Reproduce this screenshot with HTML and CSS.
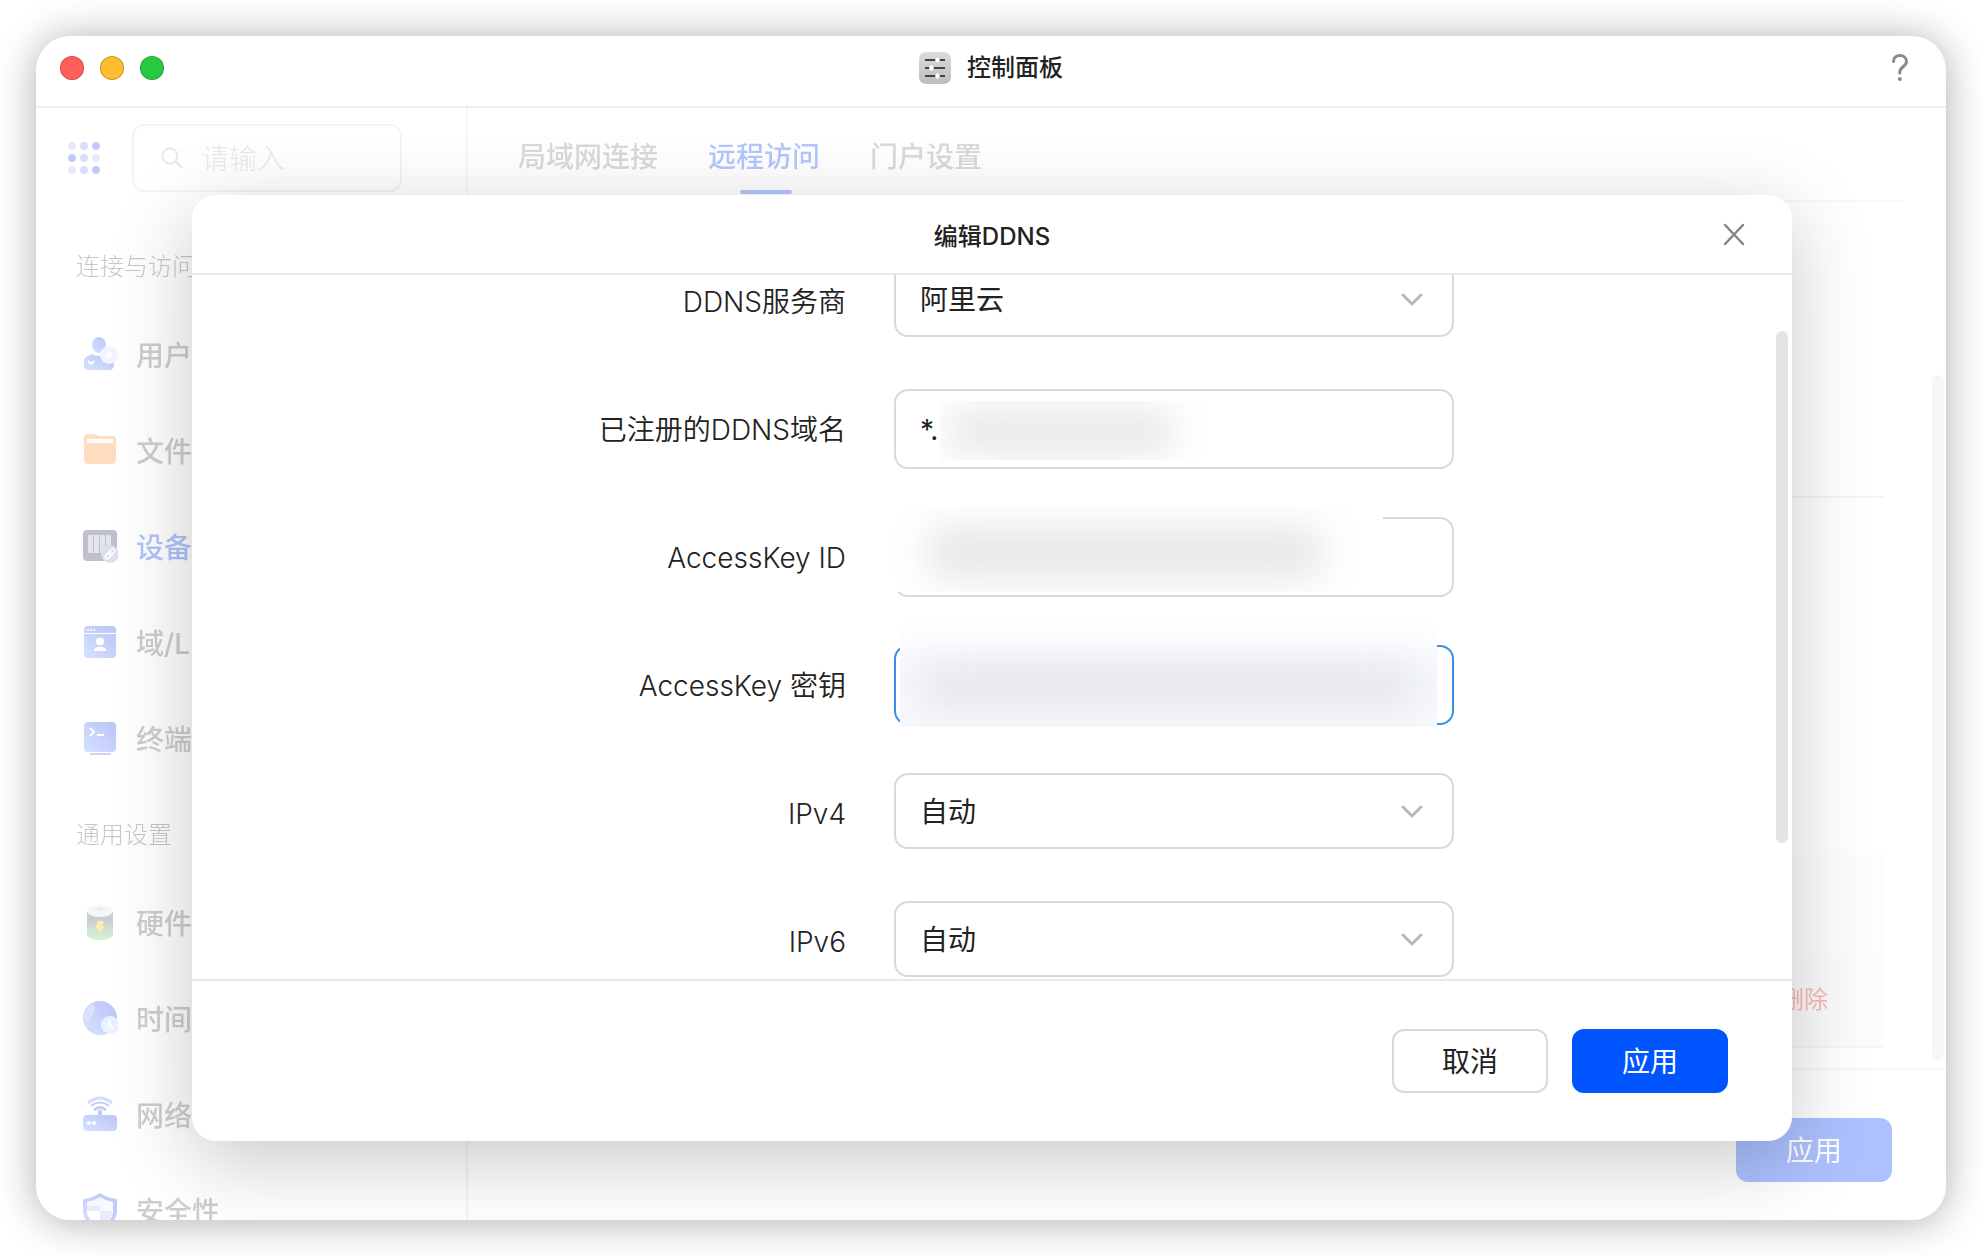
FILE: index.html
```html
<!DOCTYPE html>
<html lang="zh-CN">

<head>
    <meta charset="UTF-8">
    <meta name="viewport" content="width=device-width, initial-scale=1.0">
    <title>控制面板</title>
    <link rel="stylesheet" href="styles.css">
</head>

<body>
    <div class="window">
        <header class="titlebar">
            <div class="lights">
                <span class="light red"></span>
                <span class="light yellow"></span>
                <span class="light green"></span>
            </div>
            <div class="window-title">
                <svg width="32" height="32" viewBox="0 0 32 32">
                    <defs>
                        <linearGradient id="gray" x1="0" y1="0" x2="0" y2="1">
                            <stop offset="0" stop-color="#dcdcdc" />
                            <stop offset="1" stop-color="#bdbdbd" />
                        </linearGradient>
                    </defs>
                    <rect width="32" height="32" rx="7" fill="url(#gray)" />
                    <path d="M6 8h20M6 16h20M6 24h20" stroke="#444" stroke-width="2" />
                    <g fill="#fff" stroke="#ccc" stroke-width="1">
                        <rect x="16.500" y="5" width="4" height="6" rx="1.500" />
                        <rect x="10.500" y="13" width="4" height="6" rx="1.500" />
                        <rect x="16.500" y="21" width="4" height="6" rx="1.500" />
                    </g>
                </svg>
                <h1>控制面板</h1>
            </div>
            <button class="icon-button help" type="button" aria-label="帮助">
                <svg width="20" height="30" viewBox="0 0 20 30" fill="none" stroke="#8a8a8a" stroke-width="3" stroke-linecap="round">
                    <path d="M3.500 8.500C3.500 4.500 6.500 2.500 10 2.500s6.500 2.200 6.500 6c0 5-6.700 5.500-6.700 10.500v1" />
                    <circle cx="9.800" cy="26" r="2" fill="#8a8a8a" stroke="none" />
                </svg>
            </button>
        </header>

        <div class="content">
            <div class="backdrop">
                <aside class="sidebar">
                    <div class="search-row">
                        <svg width="32" height="32" viewBox="0 0 32 32">
                            <g fill="#b9b0f2">
                                <circle cx="4" cy="4" r="4" />
                                <circle cx="28" cy="16" r="4" />
                                <circle cx="4" cy="28" r="4" />
                            </g>
                            <g fill="#84a2fa">
                                <circle cx="16" cy="4" r="4" />
                                <circle cx="16" cy="16" r="4" />
                                <circle cx="16" cy="28" r="4" />
                            </g>
                            <g fill="#3a62ee">
                                <circle cx="28" cy="4" r="4" />
                                <circle cx="4" cy="16" r="4" />
                                <circle cx="28" cy="28" r="4" />
                            </g>
                        </svg>
                        <label class="search">
                            <svg width="22" height="22" viewBox="0 0 22 22" fill="none" stroke="#bbb" stroke-width="2" stroke-linecap="round">
                                <circle cx="9" cy="9" r="7.500" />
                                <path d="M14.500 14.500L20.500 20.500" />
                            </svg>
                            <input type="text" placeholder="请输入" aria-label="搜索">
                        </label>
                    </div>
                    <nav>
                        <h2 class="group">连接与访问</h2>
                        <a class="item" href="#">
                            <svg width="36" height="36" viewBox="0 0 36 36">
                                <defs>
                                    <linearGradient id="blue" x1="0" y1="1" x2="1" y2="0">
                                        <stop offset="0" stop-color="#7ea4ff" />
                                        <stop offset="1" stop-color="#3049e8" />
                                    </linearGradient>
                                </defs>
                                <ellipse cx="17" cy="9" rx="7" ry="8" fill="url(#blue)" />
                                <path d="M2 24q0-2 2-3l6-3q6 4 13 0l7 3q2 1 2 4v5q-1 4-5 4H8q-6 0-6-4z" fill="url(#blue)" />
                                <path d="M6 25l3 3 3-3" fill="none" stroke="#fff" stroke-width="2" />
                                <circle cx="27" cy="19" r="9" fill="#d5dcfd" />
                                <circle cx="27" cy="19" r="3" fill="#fff" />
                            </svg>
                            用户
                        </a>
                        <a class="item" href="#">
                            <svg width="36" height="36" viewBox="0 0 36 36">
                                <path d="M2 6q0-4 4-4h7l4 2h13q4 0 4 4v20H2z" fill="#fb9a48" />
                                <rect x="5" y="7" width="26" height="4" fill="#fff" />
                                <path d="M2 11h32v17q0 4-4 4H6q-4 0-4-4z" fill="#ff9b3c" />
                            </svg>
                            文件
                        </a>
                        <a class="item active" href="#">
                            <svg width="36" height="36" viewBox="0 0 36 36">
                                <rect x="1" y="2" width="34" height="31" rx="4" fill="#3b3f60" />
                                <g fill="#a6accb">
                                    <rect x="6" y="7" width="5" height="18" />
                                    <rect x="12" y="7" width="5" height="18" />
                                    <rect x="18" y="7" width="5" height="18" />
                                    <rect x="24" y="7" width="5" height="18" />
                                </g>
                                <circle cx="28" cy="26" r="9" fill="#9ca0ba" />
                                <g fill="none" stroke="#fff" stroke-width="1.500" transform="rotate(-45 28 26)">
                                    <rect x="22" y="24" width="7" height="4" rx="2" />
                                    <rect x="27" y="24" width="7" height="4" rx="2" />
                                </g>
                            </svg>
                            设备
                        </a>
                        <a class="item" href="#">
                            <svg width="36" height="36" viewBox="0 0 36 36">
                                <rect x="2" y="2" width="32" height="32" rx="4" fill="url(#blue)" />
                                <path d="M2 9.500h32" stroke="#fff" />
                                <path d="M5 6h9" stroke="#c4d0ff" stroke-width="2" stroke-dasharray="2 1" />
                                <circle cx="18" cy="17.500" r="4" fill="#fff" />
                                <path d="M12 27q0-4 4-4h4q4 0 4 4z" fill="#fff" />
                            </svg>
                            域/LDAP
                        </a>
                        <a class="item" href="#">
                            <svg width="36" height="36" viewBox="0 0 36 36">
                                <rect x="2" y="2" width="32" height="30" rx="4" fill="url(#blue)" />
                                <path d="M8 34h21" stroke="#5c7af2" stroke-width="2" />
                                <path d="M8 8l4 4-4 4M15 15h7" fill="none" stroke="#fff" stroke-width="2" />
                            </svg>
                            终端
                        </a>
                        <h2 class="group">通用设置</h2>
                        <a class="item" href="#">
                            <svg width="36" height="36" viewBox="0 0 36 36">
                                <defs>
                                    <linearGradient id="battery" x1="0" y1="0" x2="0" y2="1">
                                        <stop offset="0.300" stop-color="#5a6270" />
                                        <stop offset="0.600" stop-color="#6f9d80" />
                                        <stop offset="0.900" stop-color="#6fd078" />
                                    </linearGradient>
                                </defs>
                                <path d="M5 6h26v25q-2 5-13 5T5 31z" fill="url(#battery)" />
                                <ellipse cx="18" cy="7" rx="13" ry="6" fill="#e1e4e6" />
                                <ellipse cx="18" cy="5" rx="4" ry="1.500" fill="#b5babd" />
                                <path d="M16 17h6l-2 5h3l-7 9 1-6h-4z" fill="#ffc400" />
                            </svg>
                            硬件
                        </a>
                        <a class="item" href="#">
                            <svg width="36" height="36" viewBox="0 0 36 36">
                                <circle cx="18" cy="18" r="17" fill="url(#blue)" />
                                <path d="M1 18q3-10 10-15l2 8-8 12z" fill="#8ba6fa" />
                                <circle cx="28" cy="25" r="9" fill="#c2d5ff" />
                                <path d="M27.500 20v6l4 2" fill="none" stroke="#fff" stroke-width="2" />
                            </svg>
                            时间
                        </a>
                        <a class="item" href="#">
                            <svg width="36" height="36" viewBox="0 0 36 36">
                                <rect x="1" y="19" width="34" height="16" rx="4" fill="url(#blue)" />
                                <path d="M18 14v6" stroke="#4463ef" stroke-width="4" />
                                <g fill="none" stroke="#4463ef" stroke-width="2">
                                    <path d="M6 7q12-10 24 0" stroke-width="3" opacity=".7" />
                                    <path d="M9 10q9-7 18 0" />
                                    <path d="M12 14q6-5 12 0" stroke-width="3" />
                                </g>
                                <circle cx="7" cy="27" r="2" fill="#fff" />
                                <circle cx="12" cy="27" r="2" fill="#fff" />
                            </svg>
                            网络
                        </a>
                        <a class="item" href="#">
                            <svg width="36" height="36" viewBox="0 0 36 36">
                                <path d="M18 1q7 5 17 6v13q0 11-17 16Q1 31 1 20V7q10-1 17-6z" fill="url(#blue)" />
                                <path d="M18 5q6 4 13 5v10q0 8-13 13Q5 28 5 20V10q7-1 13-5z" fill="#e8ecff" />
                                <path d="M5 19h13v14Q6 28 5 19z" fill="#fff" />
                                <path d="M9 14h9v5H5v-4zM18 19h12q0 8-12 14z" fill="#b8bff8" />
                            </svg>
                            安全性
                        </a>
                    </nav>
                </aside>

                <main class="main">
                    <nav class="tabs">
                        <a href="#">局域网连接</a>
                        <a href="#" class="current">远程访问</a>
                        <a href="#">门户设置</a>
                    </nav>
                    <div class="scroll">
                        <section class="section"></section>
                        <section class="records">
                            <div class="records-head"></div>
                            <div class="records-row"><button class="delete" type="button">删除</button></div>
                        </section>
                        <div class="scrollbar main-bar"></div>
                    </div>
                    <footer class="main-footer">
                        <button class="button primary" type="button">应用</button>
                    </footer>
                </main>
            </div>

            <div class="modal" role="dialog" aria-labelledby="dialogTitle">
                <header class="modal-header">
                    <h2 id="dialogTitle">编辑DDNS</h2>
                    <button class="icon-button" type="button" aria-label="关闭">
                        <svg width="24" height="24" viewBox="0 0 24 24" stroke="#858585" stroke-width="2.500" stroke-linecap="round">
                            <path d="M3 3l18 19M21 3L3 22" />
                        </svg>
                    </button>
                </header>
                <div class="modal-body">
                    <form class="form">
                        <div class="row">
                            <label for="provider">DDNS服务商</label>
                            <div class="field">
                                <select id="provider">
                                    <option>阿里云</option>
                                </select>
                                <svg class="chevron" width="24" height="14" viewBox="0 0 24 14">
                                    <path d="M3 2l9 9 9-9" />
                                </svg>
                            </div>
                        </div>
                        <div class="row">
                            <label for="domain">已注册的DDNS域名</label>
                            <div class="field">
                                <input type="text" id="domain" value="*.">
                                <span class="mask mask-domain"></span>
                            </div>
                        </div>
                        <div class="row">
                            <label for="keyId">AccessKey ID</label>
                            <div class="field">
                                <input type="text" id="keyId">
                                <span class="mask mask-id"></span>
                            </div>
                        </div>
                        <div class="row">
                            <label for="keySecret">AccessKey 密钥</label>
                            <div class="field">
                                <input class="focused" type="text" id="keySecret">
                                <span class="mask mask-secret"></span>
                            </div>
                        </div>
                        <div class="row">
                            <label for="ipv4">IPv4</label>
                            <div class="field">
                                <select id="ipv4">
                                    <option>自动</option>
                                </select>
                                <svg class="chevron" width="24" height="14" viewBox="0 0 24 14">
                                    <path d="M3 2l9 9 9-9" />
                                </svg>
                            </div>
                        </div>
                        <div class="row">
                            <label for="ipv6">IPv6</label>
                            <div class="field">
                                <select id="ipv6">
                                    <option>自动</option>
                                </select>
                                <svg class="chevron" width="24" height="14" viewBox="0 0 24 14">
                                    <path d="M3 2l9 9 9-9" />
                                </svg>
                            </div>
                        </div>
                    </form>
                    <div class="scrollbar modal-bar"></div>
                </div>
                <footer class="modal-footer">
                    <button class="button" type="button">取消</button>
                    <button class="button primary" type="button">应用</button>
                </footer>
            </div>
        </div>
    </div>
</body>

</html>
```

FILE: styles.css
```css
* {
    box-sizing: border-box;
}

body {
    margin: 0;
    padding: 36px;
    height: 100vh;
    background-color: #fff;
    font-family: Inter, "Noto Sans CJK SC", sans-serif;
    font-size: 28px;
    color: #222;
}

h1,
h2 {
    margin: 0;
    font-size: 24px;
    font-weight: 500;
}

a {
    color: inherit;
    text-decoration: none;
}

svg {
    display: block;
    flex: none;
}

input,
select,
button {
    font: inherit;
    color: inherit;
}

/* 窗口 */
.window {
    display: flex;
    flex-direction: column;
    height: 100%;
    border-radius: 34px;
    background-color: #fff;
    box-shadow: 0 2px 40px rgba(0, 0, 0, 0.32);
    overflow: hidden;
}

.titlebar {
    display: grid;
    grid-template-columns: 1fr auto 1fr;
    align-items: center;
    height: 72px;
    padding: 0 24px 6px;
    border-bottom: 2px solid #eee;
}

.lights {
    display: flex;
    gap: 16px;
}

.light {
    width: 24px;
    height: 24px;
    border-radius: 50%;
    border: 1px solid rgba(0, 0, 0, 0.2);
}

.red {
    background-color: #ff5f57;
}

.yellow {
    background-color: #febc2e;
}

.green {
    background-color: #28c840;
}

.window-title {
    display: flex;
    align-items: center;
    gap: 16px;
}

.window-title h1 {
    line-height: 32px;
}

.icon-button {
    justify-self: end;
    padding: 0;
    border: none;
    background: none;
    cursor: pointer;
}

.help {
    margin-right: 12px;
}

.content {
    position: relative;
    flex: 1;
    min-height: 0;
}

/* 弹窗打开时的背景页 */
.backdrop {
    display: flex;
    height: 100%;
    opacity: 0.32;
}

.sidebar {
    width: 432px;
    border-right: 2px solid #e2e2e2;
    overflow: hidden;
}

.search-row {
    display: flex;
    align-items: center;
    gap: 32px;
    height: 112px;
    padding: 0 64px 12px 32px;
}

.search {
    display: flex;
    flex: 1;
    align-items: center;
    gap: 18px;
    height: 68px;
    padding: 0 27px;
    border: 2px solid #ddd;
    border-radius: 12px;
}

.search input {
    width: 100%;
    padding: 2px 0 0;
    border: none;
    outline: none;
    background: none;
}

.search input::placeholder {
    color: #bbb;
    font-weight: 300;
}

.group {
    padding: 6px 0 0 40px;
    font-weight: 300;
    line-height: 82px;
    color: #555;
}

.item {
    display: flex;
    align-items: center;
    gap: 18px;
    height: 96px;
    padding: 0 0 4px 46px;
    font-weight: 500;
    color: #666;
}

.item.active {
    color: #0a4bf5;
}

.main {
    display: flex;
    flex: 1;
    flex-direction: column;
}

.tabs {
    display: flex;
    gap: 50px;
    height: 94px;
    margin: 0 42px 0 50px;
    border-bottom: 2px solid #e6e6e6;
    color: #888;
    font-weight: 500;
    line-height: 98px;
}

.current {
    position: relative;
    color: #1650ff;
}

.current::after {
    content: "";
    position: absolute;
    left: 50%;
    top: 82px;
    width: 52px;
    height: 4px;
    margin-left: -24px;
    border-radius: 2px;
    background-color: #1650ff;
}

.scroll {
    position: relative;
    display: flex;
    flex: 1;
    flex-direction: column;
    justify-content: space-between;
    padding: 0 62px 20px 50px;
}

.section {
    height: 296px;
    border-bottom: 2px solid #e2e2e2;
}

.records {
    border-bottom: 2px solid #ddd;
}

.records-head {
    height: 100px;
    background-color: #fbfbfb;
}

.records-row {
    display: flex;
    align-items: center;
    justify-content: flex-end;
    height: 92px;
    padding: 0 56px 6px 0;
    background-color: #f6f6f6;
}

.delete {
    padding: 0;
    border: none;
    background: none;
    font-size: 24px;
    color: #f0281e;
}

.main-footer {
    display: flex;
    justify-content: flex-end;
    padding: 48px 54px 38px;
    border-top: 2px solid #e2e2e2;
}

.scrollbar {
    position: absolute;
    width: 12px;
    border-radius: 6px;
    background-color: #e4e4e4;
}

.main-bar {
    top: 20%;
    right: 2px;
    bottom: 8px;
}

/* 编辑弹窗 */
.modal {
    position: absolute;
    top: 87px;
    right: 154px;
    bottom: 79px;
    left: 156px;
    display: flex;
    flex-direction: column;
    border-radius: 24px;
    background-color: #fff;
    box-shadow: 0 20px 80px rgba(0, 0, 0, 0.22);
}

.modal-header {
    display: grid;
    grid-template-columns: 1fr auto 1fr;
    align-items: center;
    height: 80px;
    padding: 0 46px;
    border-bottom: 2px solid #e6e8ea;
}

.modal-header h2 {
    grid-column: 2;
}

.modal-body {
    position: relative;
    flex: 1;
    min-height: 0;
    overflow: hidden;
}

/* 表单已向下滚动 */
.form {
    display: flex;
    flex-direction: column;
    gap: 48px;
    margin-top: -14px;
}

.row {
    display: flex;
    gap: 48px;
    height: 80px;
}

.row label {
    width: 654px;
    line-height: 82px;
    text-align: right;
    font-weight: 350;
}

.field {
    position: relative;
    width: 560px;
}

.field input,
.field select {
    display: block;
    width: 100%;
    height: 80px;
    padding: 2px 24px 0;
    border: 2px solid #d9d9d9;
    border-radius: 14px;
    outline: none;
    background-color: #fff;
    appearance: none;
}

.field select {
    height: 76px;
}

.field .focused {
    border-color: #3b8fe8;
}

.chevron {
    position: absolute;
    top: 32px;
    right: 30px;
    fill: none;
    stroke: #b8b8b8;
    stroke-width: 3;
    stroke-linecap: round;
    pointer-events: none;
}

/* 敏感内容遮罩 */
.mask {
    position: absolute;
    overflow: hidden;
    background-color: #fff;
    pointer-events: none;
}

.mask::before {
    content: "";
    position: absolute;
    border-radius: 20px;
    background-color: #e8e8e8;
    filter: blur(18px);
}

.mask-domain {
    top: 12px;
    left: 46px;
    width: 270px;
    height: 59px;
}

.mask-domain::before {
    inset: 8px 34px 6px 6px;
}

.mask-id {
    top: -10px;
    left: -14px;
    width: 503px;
    height: 85px;
}

.mask-id::before {
    inset: 18px 58px 12px 46px;
}

.mask-secret {
    top: -26px;
    right: 17px;
    left: 6px;
    height: 108px;
    background: linear-gradient(#fff, #f5f8fc 50%, #f6f8fc);
}

.mask-secret::before {
    inset: 44px 20px 20px;
    background-color: #e6e7ea;
}

.modal-bar {
    top: 56px;
    right: 4px;
    height: 512px;
}

.modal-footer {
    display: flex;
    justify-content: flex-end;
    gap: 24px;
    padding: 48px 64px;
    border-top: 2px solid #e8eaea;
}

.button {
    width: 156px;
    height: 64px;
    padding: 0 0 2px;
    border: 2px solid #d9d9d9;
    border-radius: 12px;
    background-color: #fff;
    cursor: pointer;
}

.primary {
    border-color: #0055ff;
    background-color: #0055ff;
    color: #fff;
}

.backdrop .primary {
    border-color: #0040ff;
    background-color: #0040ff;
}
```
